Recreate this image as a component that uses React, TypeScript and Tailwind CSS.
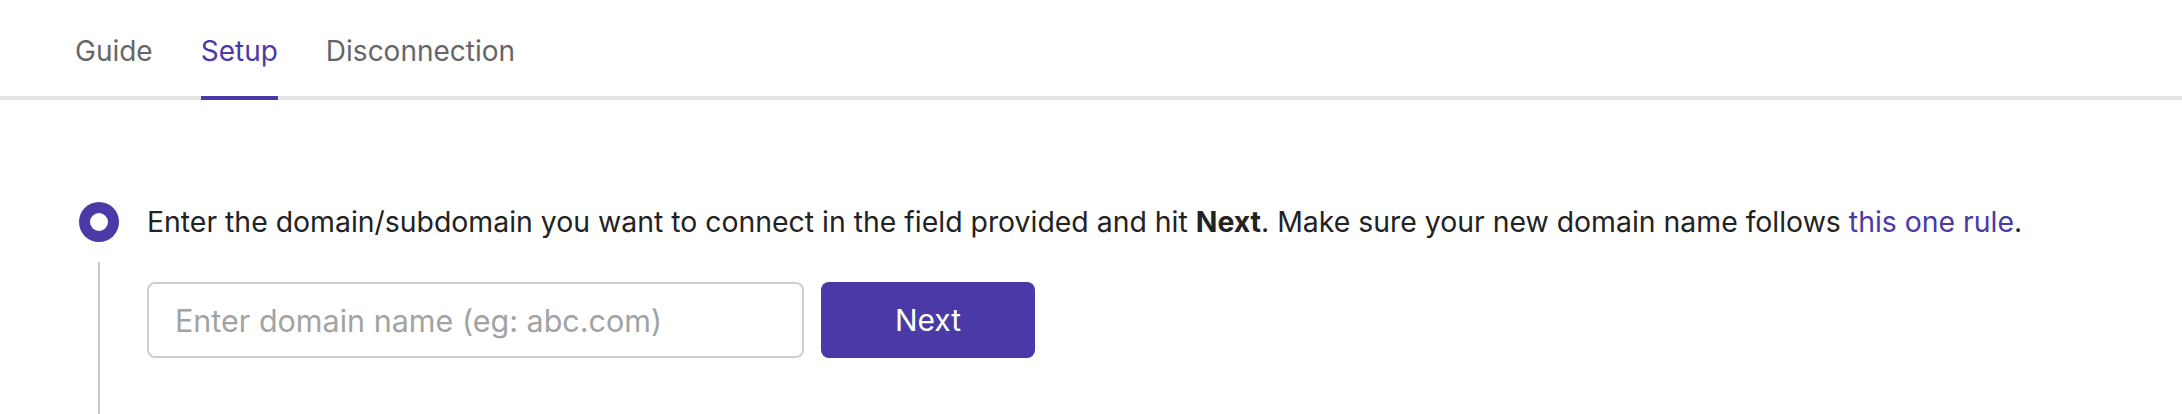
import React, { useState } from "react";

const tabs = ["Guide", "Setup", "Disconnection"];

export default function App() {
  const [active, setActive] = useState("Setup");
  const [domain, setDomain] = useState("");

  return (
    <div className="w-full h-[414px] overflow-hidden bg-white font-['Inter','Liberation_Sans',sans-serif] text-[#222]">
      {/* Tabs */}
      <div className="flex gap-12 pl-[75px] border-b-4 border-[#e6e5e3]">
        {tabs.map((tab) => (
          <button
            key={tab}
            onClick={() => setActive(tab)}
            className={
              "pt-[33px] pb-[27px] -mb-1 border-b-4 text-[28px] leading-[36px] " +
              (active === tab ? "border-[#4a3aa8] text-[#4a3aa8]" : "border-transparent text-[#666]")
            }
          >
            {tab}
          </button>
        ))}
      </div>

      {/* Step */}
      <div className="grid grid-cols-[40px_1fr] gap-x-[28px] pl-[79px] pt-[102px]">
        <div className="w-10 h-10 rounded-full bg-[#4a3aa8] flex items-center justify-center">
          <div className="w-[18px] h-[18px] rounded-full bg-white" />
        </div>
        <p className="text-[28.4px] leading-[38px] self-center whitespace-nowrap">
          Enter the domain/subdomain you want to connect in the field provided and hit{" "}
          <span className="font-bold">Next</span>. Make sure your new domain name follows{" "}
          <a href="#" className="text-[#4a3aa8]">this one rule</a>.
        </p>

        <div className="flex justify-center pt-5 h-[172px]">
          <div className="w-[2px] h-full bg-[#c8c8c8]" />
        </div>
        <div className="flex gap-[17px] pt-10">
          <input
            value={domain}
            onChange={(e) => setDomain(e.target.value)}
            placeholder="Enter domain name (eg: abc.com)"
            className="w-[657px] h-[76px] border-2 border-[#d0cfcb] rounded-lg px-[26px] text-[30.5px] placeholder:text-[#a3a3a3] outline-none"
          />
          <button className="w-[214px] h-[76px] rounded-lg bg-[#4a3aa8] text-white text-[30px]">
            Next
          </button>
        </div>
      </div>
    </div>
  );
}
